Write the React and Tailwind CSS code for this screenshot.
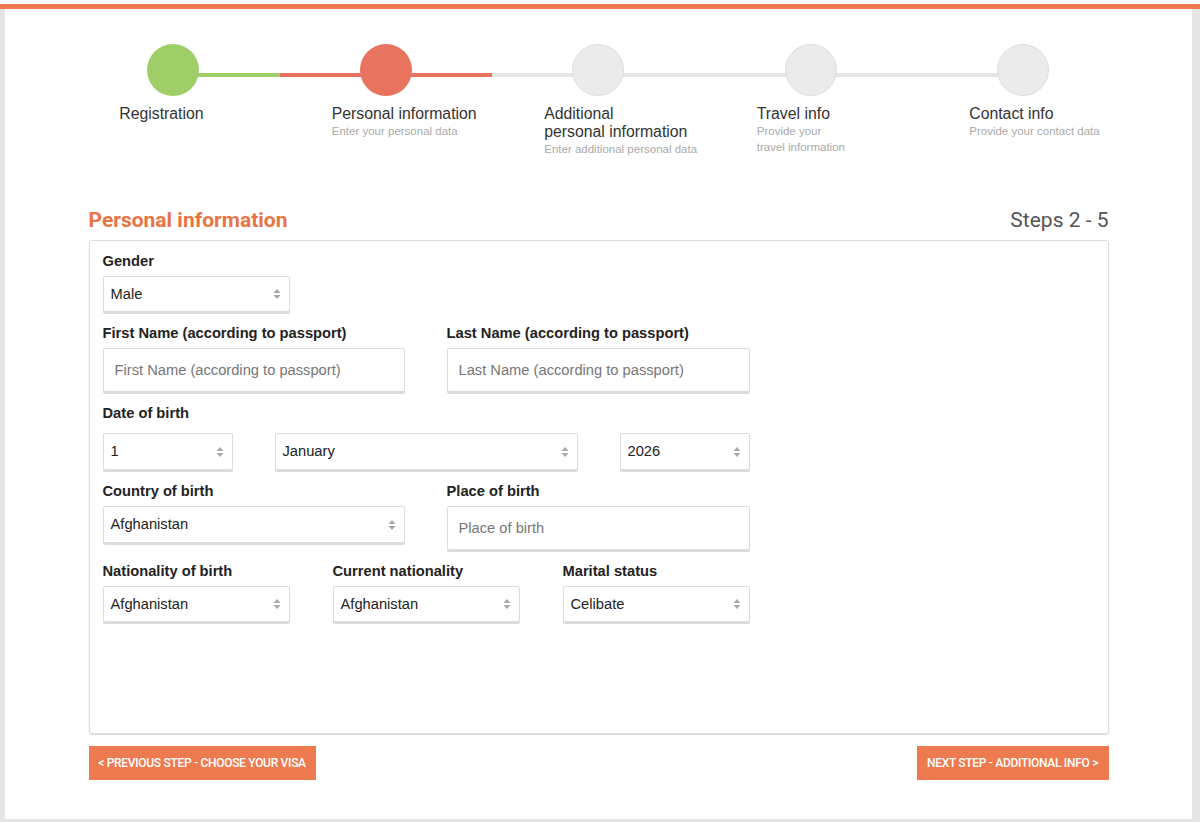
import React from "react";

const steps = [
  { title: "Registration", sub: null, state: "done" },
  { title: "Personal information", sub: ["Enter your personal data"], state: "active" },
  { title: ["Additional", "personal information"], sub: ["Enter additional personal data"], state: "todo" },
  { title: "Travel info", sub: ["Provide your", "travel information"], state: "todo" },
  { title: "Contact info", sub: ["Provide your contact data"], state: "todo" },
];

const lineColor = (i, side) => {
  // left half of step i / right half of step i
  if (side === "right" && i === 0) return "bg-[#9fcd68]";
  if (i === 1) return "bg-[#e8735e]";
  return "bg-[#e6e6e6]";
};

const Step = ({ step, i }) => {
  const circle =
    step.state === "done"
      ? "bg-[#9fcd68]"
      : step.state === "active"
      ? "bg-[#e8735e]"
      : "bg-[#ebebeb] border border-[#dedede]";
  const title = Array.isArray(step.title) ? step.title : [step.title];
  return (
    <div className="relative w-[212.5px] shrink-0">
      <div className="relative h-[52px]">
        {i > 0 && (
          <div className={`absolute left-0 w-1/2 top-[29px] h-[4px] ${lineColor(i, "left")}`} />
        )}
        {i < steps.length - 1 && (
          <div className={`absolute right-0 w-1/2 top-[29px] h-[4px] ${lineColor(i, "right")}`} />
        )}
        <div className={`absolute left-[80px] top-0 w-[52px] h-[52px] rounded-full ${circle}`} />
      </div>
      <div className="pl-[52px] pt-[9px]">
        {title.map((t) => (
          <div key={t} className="text-[15.8px] leading-[18px] text-[#333]">
            {t}
          </div>
        ))}
        {step.sub &&
          step.sub.map((s) => (
            <div key={s} className="text-[11.5px] leading-[16px] text-[#aaa]">
              {s}
            </div>
          ))}
      </div>
    </div>
  );
};

const Arrows = () => (
  <svg width="8" height="12" viewBox="0 0 8 12" className="absolute right-[8px] top-1/2 -translate-y-1/2">
    <path d="M4 1 L7.5 5 L0.5 5 Z" fill="#a3aaad" />
    <path d="M4 11 L7.5 7 L0.5 7 Z" fill="#a3aaad" />
  </svg>
);

const Select = ({ value, w, h = "h-[37px]" }) => (
  <div
    className={`relative ${w} ${h} border border-[#dcdcdc] rounded-[2px] bg-white shadow-[0_2px_0_#dcdcdc] flex items-center pl-[7px] text-[14.7px] text-[#222]`}
  >
    {value}
    <Arrows />
  </div>
);

const Input = ({ placeholder, w }) => (
  <div
    className={`${w} h-[44px] border border-[#dcdcdc] rounded-[2px] bg-white shadow-[0_2px_0_#dcdcdc] flex items-center pl-[11px] text-[14.7px] text-[#777]`}
  >
    {placeholder}
  </div>
);

const Label = ({ children }) => (
  <div className="text-[14.7px] leading-[20px] font-bold text-[#222]">{children}</div>
);

export default function App() {
  return (
    <div className="bg-white font-['Liberation_Sans',Arial,sans-serif]">
      <div className="h-[4px] bg-white" />
      <div className="h-[5px] bg-[#ea7b4f]" />
      <div className="bg-[#e5e5e5] pl-[5px] pr-[8px] pb-[3px]">
        <div className="bg-white h-[810px] pt-[35px]">
          <div className="w-[1062.5px] mx-auto flex">
            {steps.map((s, i) => (
              <Step key={i} step={s} i={i} />
            ))}
          </div>

          <div className="w-[1020px] mx-auto">
            <div className="flex items-end justify-between mt-[51px] h-[24px] font-['Roboto',sans-serif]">
              <div className="text-[21px] leading-[24px] font-bold text-[#ea7444]">Personal information</div>
              <div className="text-[21px] leading-[24px] text-[#555]">Steps 2 - 5</div>
            </div>

            <div className="mt-[8px] h-[494px] border border-[#dcdcdc] rounded-[3px] shadow-[0_1px_1px_#d5dde0] px-[13px] pt-[10px]">
              <Label>Gender</Label>
              <div className="mt-[5px]">
                <Select value="Male" w="w-[187px]" h="h-[36px]" />
              </div>

              <div className="mt-[11px] grid grid-cols-[302px_303px] gap-x-[42px] w-[647px]">
                <div>
                  <Label>First Name (according to passport)</Label>
                  <div className="mt-[5px]">
                    <Input placeholder="First Name (according to passport)" w="w-[302px]" />
                  </div>
                </div>
                <div>
                  <Label>Last Name (according to passport)</Label>
                  <div className="mt-[5px]">
                    <Input placeholder="Last Name (according to passport)" w="w-[303px]" />
                  </div>
                </div>
              </div>

              <div className="mt-[11px]">
                <Label>Date of birth</Label>
                <div className="mt-[10px] flex gap-[42px] w-[647px]">
                  <Select value="1" w="w-[130px]" />
                  <Select value="January" w="w-[303px]" />
                  <Select value="2026" w="w-[130px]" />
                </div>
              </div>

              <div className="mt-[11px] grid grid-cols-[302px_303px] gap-x-[42px] w-[647px]">
                <div>
                  <Label>Country of birth</Label>
                  <div className="mt-[5px]">
                    <Select value="Afghanistan" w="w-[302px]" />
                  </div>
                </div>
                <div>
                  <Label>Place of birth</Label>
                  <div className="mt-[5px]">
                    <Input placeholder="Place of birth" w="w-[303px]" />
                  </div>
                </div>
              </div>

              <div className="mt-[11px] grid grid-cols-[187px_187px_187px] gap-x-[43px] w-[647px]">
                <div>
                  <Label>Nationality of birth</Label>
                  <div className="mt-[5px]">
                    <Select value="Afghanistan" w="w-[187px]" h="h-[36px]" />
                  </div>
                </div>
                <div>
                  <Label>Current nationality</Label>
                  <div className="mt-[5px]">
                    <Select value="Afghanistan" w="w-[187px]" h="h-[36px]" />
                  </div>
                </div>
                <div>
                  <Label>Marital status</Label>
                  <div className="mt-[5px]">
                    <Select value="Celibate" w="w-[187px]" h="h-[36px]" />
                  </div>
                </div>
              </div>
            </div>

            <div className="mt-[12px] flex justify-between font-['Roboto',sans-serif]">
              <button className="h-[34px] w-[227px] bg-[#ee7a50] text-white text-[12px] tracking-[-0.3px] font-medium">
                &lt; PREVIOUS STEP - CHOOSE YOUR VISA
              </button>
              <button className="h-[34px] w-[192px] bg-[#ee7a50] text-white text-[12px] tracking-[-0.3px] font-medium">
                NEXT STEP - ADDITIONAL INFO &gt;
              </button>
            </div>
          </div>
        </div>
      </div>
    </div>
  );
}
